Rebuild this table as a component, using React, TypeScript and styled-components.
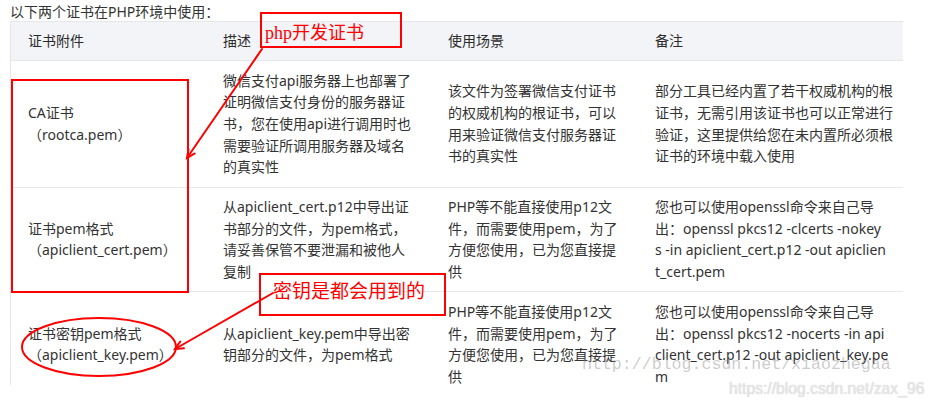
import React from 'react';
import styled, { createGlobalStyle } from 'styled-components';

const GlobalStyle = createGlobalStyle`
  html, body {
    margin: 0;
    padding: 0;
    background: #fff;
  }
`;

const Page = styled.div`
  position: relative;
  width: 935px;
  height: 408px;
  overflow: hidden;
  background: #fff;
  color: #333;
  font-family: "Noto Sans", "Noto Sans CJK SC", sans-serif;
  font-size: 14px;
  text-spacing-trim: space-all;
`;

const Caption = styled.div`
  height: 19px;
  padding: 2px 0 0 10px;
  line-height: 19px;
`;

const TableFrame = styled.div`
  box-sizing: border-box;
  width: 893px;
  height: 364px;
  margin-left: 10px;
  overflow: hidden;
  border-left: 1px solid #e6e6e6;
`;

const Table = styled.table`
  width: 892px;
  border-collapse: collapse;
  table-layout: fixed;
`;

const Col = styled.col<{ $w: number }>`
  width: ${(p) => p.$w}px;
`;

const HeadCell = styled.th<{ $pr: number }>`
  padding: 8px ${(p) => p.$pr}px 8px 17px;
  background: #f3f4f8;
  border-top: 1px solid #e6e7eb;
  border-bottom: 1px solid #e6e7eb;
  font-weight: normal;
  line-height: 22px;
  text-align: left;
  color: #2b2b2b;
`;

const Cell = styled.td<{ $pr: number }>`
  padding: 8.5px ${(p) => p.$pr}px 8.5px 17px;
  border-bottom: 1px solid #e8e8e8;
  line-height: 21.7px;
  vertical-align: middle;
  word-break: break-all;
  white-space: pre-line;
`;

const FileName = styled.span`
  display: block;
`;

// annotations drawn over the table
const Callout = styled.div<{ $pl: number; $pt: number; $size: number }>`
  position: absolute;
  box-sizing: border-box;
  padding: ${(p) => p.$pt}px 0 0 ${(p) => p.$pl}px;
  border: 2px solid #ff0000;
  color: #ff0000;
  font-family: "Liberation Serif", "Noto Sans CJK SC", serif;
  font-size: ${(p) => p.$size}px;
  line-height: 22px;
  white-space: nowrap;
`;

const Marker = styled.div`
  position: absolute;
  box-sizing: border-box;
  border: 2px solid #ff0000;
`;

const Ink = styled.svg`
  position: absolute;
  left: 0;
  top: 0;
  pointer-events: none;
`;

const Watermark = styled.div`
  position: absolute;
  white-space: nowrap;
  pointer-events: none;
`;

const OldMark = styled(Watermark)`
  left: 582px;
  top: 354px;
  font-family: "Liberation Mono", monospace;
  font-size: 16.6px;
  line-height: 22px;
  color: rgba(140, 140, 140, 0.45);
`;

const NewMark = styled(Watermark)`
  left: 729px;
  top: 379px;
  font-family: "Liberation Sans", sans-serif;
  font-size: 15.7px;
  line-height: 20px;
  color: rgba(235, 235, 235, 0.9);
  text-shadow: 0 0 1px rgba(0, 0, 0, 0.25);
`;

const columns = [
  { title: '证书附件', w: 195, pr: 16 },
  { title: '描述', w: 225, pr: 14 },
  { title: '使用场景', w: 207, pr: 16 },
  { title: '备注', w: 265, pr: 8 },
];

const rows = [
  {
    name: 'CA证书',
    file: 'rootca.pem',
    desc: '微信支付api服务器上也部署了证明微信支付身份的服务器证书，您在使用api进行调用时也需要验证所调用服务器及域名的真实性',
    scene: '该文件为签署微信支付证书的权威机构的根证书，可以用来验证微信支付服务器证书的真实性',
    note: '部分工具已经内置了若干权威机构的根证书，无需引用该证书也可以正常进行验证，这里提供给您在未内置所必须根证书的环境中载入使用',
  },
  {
    name: '证书pem格式',
    file: 'apiclient_cert.pem',
    desc: '从apiclient_cert.p12中导出证书部分的文件，为pem格式，请妥善保管不要泄漏和被他人复制',
    scene: 'PHP等不能直接使用p12文件，而需要使用pem，为了方便您使用，已为您直接提供',
    note: '您也可以使用openssl命令来自己导\n出：openssl pkcs12 -clcerts -nokey\ns -in apiclient_cert.p12 -out apiclien\nt_cert.pem',
  },
  {
    name: '证书密钥pem格式',
    file: 'apiclient_key.pem',
    desc: '从apiclient_key.pem中导出密钥部分的文件，为pem格式',
    scene: 'PHP等不能直接使用p12文件，而需要使用pem，为了方便您使用，已为您直接提供',
    note: '您也可以使用openssl命令来自己导\n出：openssl pkcs12 -nocerts -in api\nclient_cert.p12 -out apiclient_key.pe\nm',
  },
];

const arrowHead = (x1: number, y1: number, x2: number, y2: number, size: number) => {
  const len = Math.hypot(x2 - x1, y2 - y1);
  const bx = (x1 - x2) / len;
  const by = (y1 - y2) / len;
  const a = (25 * Math.PI) / 180;
  const c = Math.cos(a);
  const s = Math.sin(a);
  const p1 = [x2 + (bx * c - by * s) * size, y2 + (bx * s + by * c) * size];
  const p2 = [x2 + (bx * c + by * s) * size, y2 + (-bx * s + by * c) * size];
  return `M${p1[0]},${p1[1]} L${x2},${y2} L${p2[0]},${p2[1]}`;
};

const Arrow = ({ from, to }: { from: [number, number]; to: [number, number] }) => (
  <g stroke="#ff0000" strokeWidth={2} fill="none" strokeLinecap="round">
    <line x1={from[0]} y1={from[1]} x2={to[0]} y2={to[1]} />
    <path d={arrowHead(from[0], from[1], to[0], to[1], 9)} />
  </g>
);

export default function App() {
  return (
    <Page>
      <GlobalStyle />
      <Caption>以下两个证书在PHP环境中使用：</Caption>
      <TableFrame>
        <Table>
          <colgroup>
            {columns.map((c) => (
              <Col key={c.title} $w={c.w} />
            ))}
          </colgroup>
          <thead>
            <tr>
              {columns.map((c) => (
                <HeadCell key={c.title} $pr={c.pr}>{c.title}</HeadCell>
              ))}
            </tr>
          </thead>
          <tbody>
            {rows.map((r) => (
              <tr key={r.file}>
                <Cell $pr={columns[0].pr}>
                  {r.name}
                  <FileName>（{r.file}）</FileName>
                </Cell>
                <Cell $pr={columns[1].pr}>{r.desc}</Cell>
                <Cell $pr={columns[2].pr}>{r.scene}</Cell>
                <Cell $pr={columns[3].pr}>{r.note}</Cell>
              </tr>
            ))}
          </tbody>
        </Table>
      </TableFrame>

      <OldMark>http://blog.csdn.net/xiaozhegaa</OldMark>
      <NewMark>https://blog.csdn.net/zax_96</NewMark>

      <Marker style={{ left: 11, top: 79, width: 178, height: 214 }} />
      <Callout $pl={3} $pt={8} $size={18} style={{ left: 260, top: 12, width: 142, height: 36 }}>
        php开发证书
      </Callout>
      <Callout $pl={12} $pt={6} $size={19} style={{ left: 259, top: 273, width: 187, height: 43 }}>
        密钥是都会用到的
      </Callout>
      <Ink width={935} height={408}>
        <ellipse cx={99} cy={347} rx={77} ry={29} stroke="#ff0000" strokeWidth={2} fill="none" />
        <Arrow from={[262, 49]} to={[187, 158]} />
        <Arrow from={[273, 293]} to={[175, 349]} />
      </Ink>
    </Page>
  );
}
